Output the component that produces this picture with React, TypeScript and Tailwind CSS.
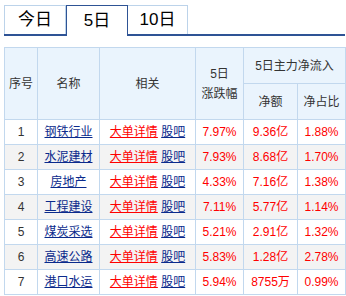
import React from "react";

const rows = [
  { no: 1, name: "钢铁行业", chg: "7.97%", net: "9.36亿", pct: "1.88%" },
  { no: 2, name: "水泥建材", chg: "7.93%", net: "8.68亿", pct: "1.70%" },
  { no: 3, name: "房地产", chg: "4.33%", net: "7.16亿", pct: "1.38%" },
  { no: 4, name: "工程建设", chg: "7.11%", net: "5.77亿", pct: "1.14%" },
  { no: 5, name: "煤炭采选", chg: "5.21%", net: "2.91亿", pct: "1.32%" },
  { no: 6, name: "高速公路", chg: "5.83%", net: "1.28亿", pct: "2.78%" },
  { no: 7, name: "港口水运", chg: "5.94%", net: "8755万", pct: "0.99%" },
];

const font = { fontFamily: '"Liberation Sans", "Noto Sans CJK SC", sans-serif' };

export default function App() {
  return (
    <div className="w-[346px] h-[296px] bg-white pl-[4px] pt-[5px]" style={font}>
      {/* Tabs */}
      <div className="flex w-[341px] border-b-2 border-[#2e5395] h-[31px]">
        <div className="w-[62px] h-[29px] border border-b-0 border-[#bcd3ea] flex items-center justify-center text-[17px] text-black">
          今日
        </div>
        <div className="w-[62px] h-[31px] -mb-[2px] border border-b-0 border-[#2e5395] bg-white flex items-center justify-center text-[17px] text-black">
          5日
        </div>
        <div className="w-[60px] h-[29px] border border-b-0 border-l-0 border-[#bcd3ea] flex items-center justify-center text-[17px] text-black">
          10日
        </div>
      </div>

      {/* Table */}
      <table className="mt-[11px] w-[341px] table-fixed border-collapse text-[12px] text-[#333]">
        <colgroup>
          <col className="w-[33px]" />
          <col className="w-[62px]" />
          <col className="w-[96px]" />
          <col className="w-[48px]" />
          <col className="w-[54px]" />
          <col className="w-[48px]" />
        </colgroup>
        <thead>
          <tr className="h-[36px] bg-[#eaf4fd]">
            <th rowSpan={2} className="border border-[#c2d8ee] font-normal">序号</th>
            <th rowSpan={2} className="border border-[#c2d8ee] font-normal">名称</th>
            <th rowSpan={2} className="border border-[#c2d8ee] font-normal">相关</th>
            <th rowSpan={2} className="border border-[#c2d8ee] font-normal leading-[20px]">
              5日
              <br />
              涨跌幅
            </th>
            <th colSpan={2} className="border border-[#c2d8ee] font-normal">5日主力净流入</th>
          </tr>
          <tr className="h-[36px] bg-[#eaf4fd]">
            <th className="border border-[#c2d8ee] font-normal">净额</th>
            <th className="border border-[#c2d8ee] font-normal">净占比</th>
          </tr>
        </thead>
        <tbody>
          {rows.map((r) => (
            <tr key={r.no} className={`h-[25px] ${r.no % 2 === 0 ? "bg-[#f3f3f3]" : "bg-white"}`}>
              <td className="border border-[#c2d8ee] text-center">{r.no}</td>
              <td className="border border-[#c2d8ee] text-center">
                <a className="text-[#0a2a8c] underline">{r.name}</a>
              </td>
              <td className="border border-[#c2d8ee] text-center whitespace-nowrap">
                <a className="text-[#ff0000] underline">大单详情</a>{" "}
                <a className="text-[#0a2a8c] underline">股吧</a>
              </td>
              <td className="border border-[#c2d8ee] text-center text-[#ff0000]">{r.chg}</td>
              <td className="border border-[#c2d8ee] text-center text-[#ff0000]">{r.net}</td>
              <td className="border border-[#c2d8ee] text-center text-[#ff0000]">{r.pct}</td>
            </tr>
          ))}
        </tbody>
      </table>
    </div>
  );
}
